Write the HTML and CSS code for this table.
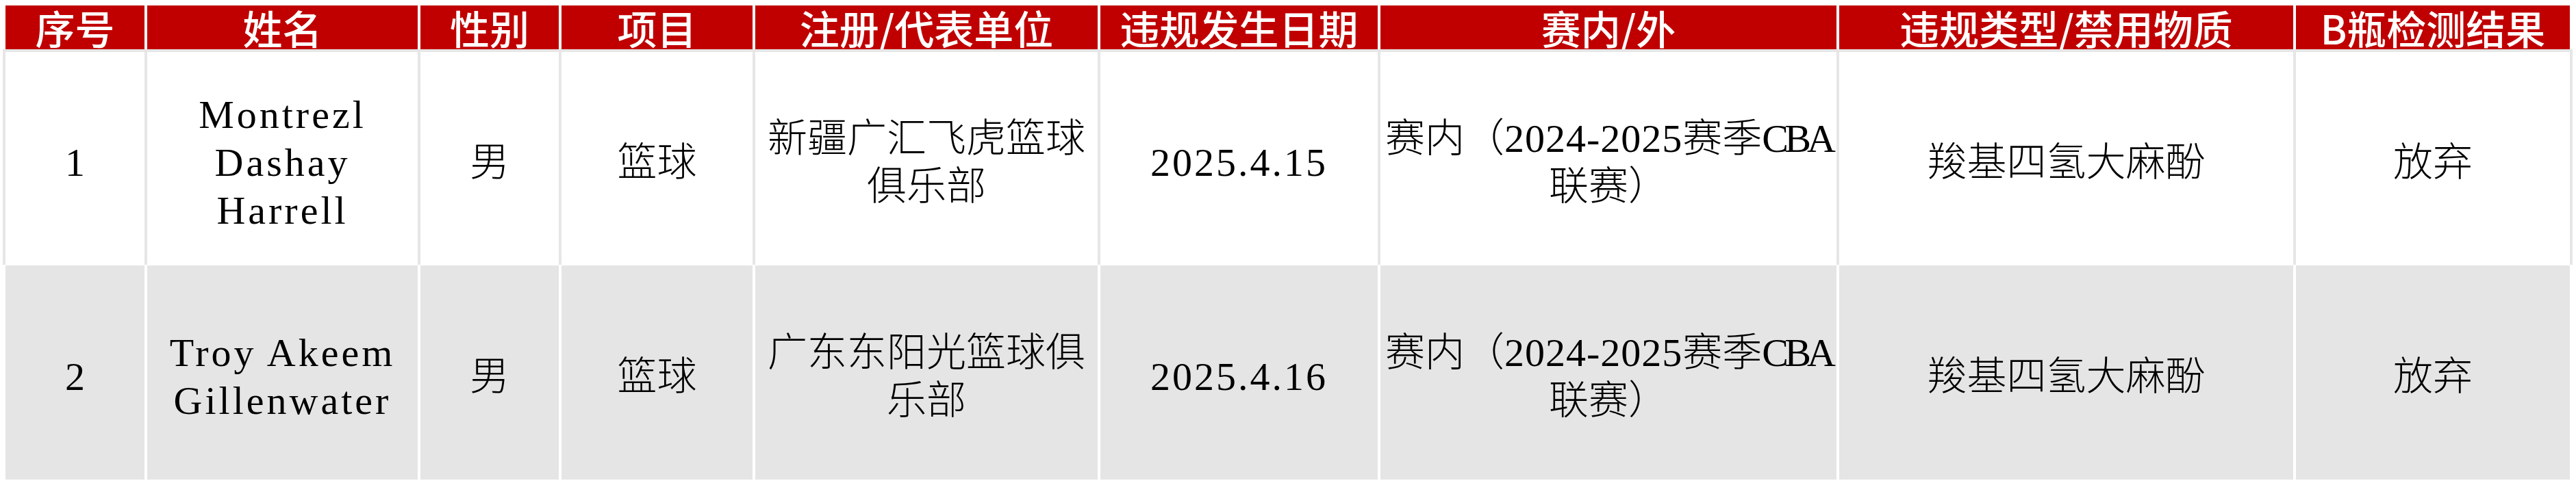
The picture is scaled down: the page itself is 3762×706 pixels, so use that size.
FILE: index.html
```html
<!DOCTYPE html>
<html lang="zh-CN">
<head>
<meta charset="utf-8">
<title>违规名单</title>
<link rel="stylesheet" href="styles.css">
</head>
<body>
<div class="sheet">
  <div class="row head">
    <div class="cell">序号</div>
    <div class="cell">姓名</div>
    <div class="cell">性别</div>
    <div class="cell">项目</div>
    <div class="cell">注册/代表单位</div>
    <div class="cell">违规发生日期</div>
    <div class="cell">赛内/外</div>
    <div class="cell">违规类型/禁用物质</div>
    <div class="cell">B瓶检测结果</div>
  </div>
  <div class="frame">
    <div class="row body odd">
      <div class="cell"><div class="txt"><span class="num">1</span></div></div>
      <div class="cell"><div class="txt"><span class="name">Montrezl Dashay Harrell</span></div></div>
      <div class="cell"><div class="txt">男</div></div>
      <div class="cell"><div class="txt">篮球</div></div>
      <div class="cell"><div class="txt">新疆广汇飞虎篮球俱乐部</div></div>
      <div class="cell"><div class="txt"><span class="num date">2025.4.15</span></div></div>
      <div class="cell"><div class="txt">赛内（<span class="num season">2024-2025</span>赛季<span class="num cba">CBA</span>联赛）</div></div>
      <div class="cell"><div class="txt">羧基四氢大麻酚</div></div>
      <div class="cell"><div class="txt">放弃</div></div>
    </div>
  </div>
  <div class="row body even">
    <div class="cell"><div class="txt"><span class="num">2</span></div></div>
    <div class="cell"><div class="txt"><span class="name">Troy Akeem Gillenwater</span></div></div>
    <div class="cell"><div class="txt">男</div></div>
    <div class="cell"><div class="txt">篮球</div></div>
    <div class="cell"><div class="txt">广东东阳光篮球俱乐部</div></div>
    <div class="cell"><div class="txt"><span class="num date">2025.4.16</span></div></div>
    <div class="cell"><div class="txt">赛内（<span class="num season">2024-2025</span>赛季<span class="num cba">CBA</span>联赛）</div></div>
    <div class="cell"><div class="txt">羧基四氢大麻酚</div></div>
    <div class="cell"><div class="txt">放弃</div></div>
  </div>
</div>
</body>
</html>
```
FILE: styles.css
```css
html, body {
  margin: 0;
  padding: 0;
  background: #ffffff;
}
body {
  padding: 8px;
  font-family: "Noto Sans CJK SC", "Noto Sans", sans-serif;
}
.sheet {
  width: 3745px;
  display: flex;
  flex-direction: column;
}
.row {
  display: grid;
  grid-template-columns: 203px 395px 202px 279px 500px 405px 666px 663px 400px;
  column-gap: 4px;
}
.cell {
  display: flex;
  align-items: center;
  justify-content: center;
  text-align: center;
  overflow: hidden;
}
.head .cell {
  height: 64px;
  background: #c00000;
  color: #ffffff;
  font-size: 58px;
  line-height: 64px;
  font-weight: 500;
  white-space: nowrap;
  align-items: flex-start;
}
.frame {
  margin: 0 -4px;
  padding: 4px 4px 0;
  background: #e6e6e6;
}
.body .cell {
  color: #000000;
  font-size: 58px;
  line-height: 70px;
  font-weight: 300;
}
.odd .cell {
  height: 311px;
  background: #ffffff;
}
.even {
  margin-top: 1px;
}
.even .cell {
  height: 313px;
  background: #e5e5e5;
}
.txt {
  width: 100%;
}
.num {
  font-family: "Liberation Serif", serif;
  font-weight: 400;
  line-height: 40px;
}
.date {
  letter-spacing: 3px;
}
.season {
  letter-spacing: 1px;
}
.cba {
  letter-spacing: -0.1em;
}
.name {
  font-family: "Liberation Serif", serif;
  font-weight: 400;
  line-height: 40px;
  letter-spacing: 4px;
}
```
